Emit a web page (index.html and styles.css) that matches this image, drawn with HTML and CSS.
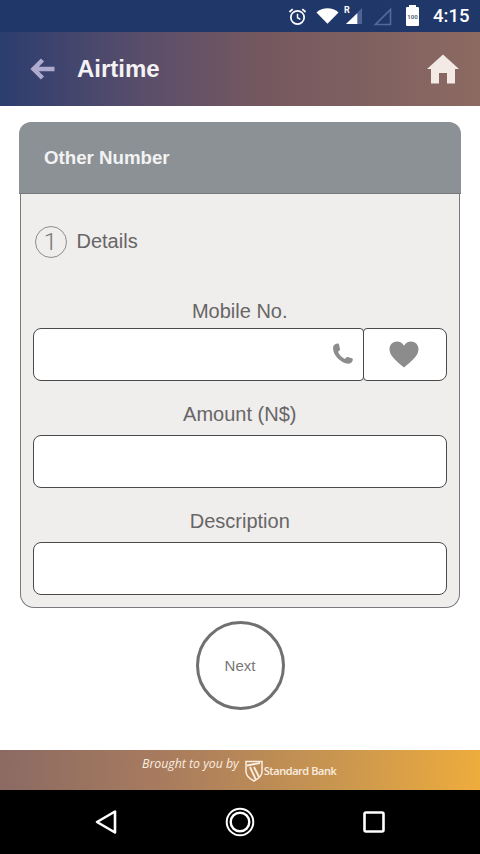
FILE: index.html
```html
<!DOCTYPE html>
<html lang="en">
<head>
<meta charset="utf-8">
<title>Airtime</title>
<link rel="stylesheet" href="styles.css">
</head>
<body>
<div class="screen">
  <div class="statusbar">
    <svg class="st-alarm" width="19" height="19" viewBox="0 0 20 20"><circle cx="10" cy="11" r="7" fill="none" stroke="#fff" stroke-width="1.8"/><path d="M10 7v4.300l3 1.800" fill="none" stroke="#fff" stroke-width="1.500"/><path d="M1.500 5.200 5 2.200M18.500 5.200 15 2.200" stroke="#fff" stroke-width="1.900"/></svg>
    <svg class="st-wifi" width="23" height="18" viewBox="0 0 25 18"><path d="M.5 5.200C4 2 8 .7 12.500.7S21 2 24.500 5.200L12.500 17.500z" fill="#fff"/></svg>
    <div class="st-cell">
      <svg width="18" height="18" viewBox="0 0 19 19"><path d="M18 1v17H1z" fill="#4e6394"/><path d="M13 6.500V18H1z" fill="#fff"/></svg>
      <span class="st-r">R</span>
    </div>
    <svg class="st-sig2" width="19" height="19" viewBox="0 0 19 19"><path d="M17.500 2.500v15H2.500z" fill="none" stroke="#55699a" stroke-width="1.700"/></svg>
    <div class="st-batt"><span>100</span></div>
    <span class="st-time">4:15</span>
  </div>
  <header class="appbar">
    <svg class="back" width="26" height="24" viewBox="0 0 26 24"><path d="M12.500 3 3.500 12l9 9M4.500 12h20" fill="none" stroke="#aeabce" stroke-width="4.400"/></svg>
    <h1 class="title">Airtime</h1>
    <svg class="home" width="34" height="30" viewBox="0 0 34 30"><path d="M17 .5 33 15h-4v14.500h-8V19h-8v10.500H5V15H1z" fill="#f3e9e5"/></svg>
  </header>
  <main class="content">
    <section class="card">
      <div class="card-head">Other Number</div>
      <div class="card-body">
        <div class="step"><span class="step-num">1</span><span class="step-label">Details</span></div>
        <div class="field first">
          <label class="field-label">Mobile No.</label>
          <div class="mobile-row">
            <div class="input mobile-input">
              <svg width="27" height="27" viewBox="0 0 24 24"><path d="M3 4.500c1-1.500 2.500-2.300 3.800-2.200.8 0 1.200.4 1.300 1.200l.8 3.700c.1.700-.2 1.100-.7 1.500l-1 .9c1 2.800 3.200 5.100 6 6.300l1-1.100c.5-.5 1-.7 1.700-.5l3.400 1c.7.200 1.100.6 1 1.400-.2 1.400-1.200 2.900-2.900 3.400C10.500 21 1 11.500 3 4.500z" fill="#8c8c8c"/></svg>
            </div>
            <div class="input fav">
              <svg width="30" height="27" viewBox="0 0 30 27"><path d="M15 26.500C9 21 .5 15.500.5 8.200.5 3.500 4 .5 8 .5c3 0 5.500 1.500 7 4.200C16.500 2 19 .5 22 .5c4 0 7.500 3 7.500 7.700C29.500 15.500 21 21 15 26.500z" fill="#8c8c8c"/></svg>
            </div>
          </div>
        </div>
        <div class="field">
          <label class="field-label">Amount (N$)</label>
          <div class="input"></div>
        </div>
        <div class="field">
          <label class="field-label">Description</label>
          <div class="input"></div>
        </div>
      </div>
    </section>
    <button class="next" type="button">Next</button>
  </main>
  <div class="sponsor">
    <span class="brought">Brought to you by</span>
    <svg class="shield" width="18" height="22" viewBox="0 0 18 22"><path d="M1 1.500h16v10c0 4.500-4 7.500-8 9.500-4-2-8-5-8-9.500z" fill="none" stroke="#fbeee0" stroke-width="1.500"/><path d="M2 5.500 15 3M5 7l6 13M9 7l5 10" fill="none" stroke="#fbeee0" stroke-width="1.800"/></svg>
    <span class="bank">Standard Bank</span>
  </div>
  <nav class="navbar">
    <svg width="24" height="26" viewBox="0 0 24 26"><path d="M21 2.500v21L3 13z" fill="none" stroke="#fff" stroke-width="2.600" stroke-linejoin="round"/></svg>
    <svg width="30" height="30" viewBox="0 0 30 30"><circle cx="15" cy="15" r="13.300" fill="none" stroke="#fff" stroke-width="2"/><circle cx="15" cy="15" r="9.300" fill="none" stroke="#fff" stroke-width="2.400"/></svg>
    <svg width="24" height="24" viewBox="0 0 24 24"><rect x="2.500" y="2.500" width="19" height="19" rx="1.500" fill="none" stroke="#fff" stroke-width="2.600"/></svg>
  </nav>
</div>
</body>
</html>
```

FILE: styles.css
```css
* { box-sizing: border-box; }
html, body { margin: 0; padding: 0; }
body { width: 480px; height: 854px; overflow: hidden; background: #fff; font-family: "Liberation Sans", Arial, sans-serif; }
.screen { width: 480px; height: 854px; display: flex; flex-direction: column; }

.statusbar { height: 32px; background: #1f3769; display: flex; align-items: center; padding-left: 288px; color: #fff; flex: none; }
.st-alarm { margin-right: 9px; }
.st-wifi { margin-right: 6px; }
.st-cell { position: relative; width: 18px; height: 18px; }
.st-cell svg { display: block; }
.st-r { position: absolute; top: -2px; left: -1px; font: bold 9px "Roboto", sans-serif; }
.st-sig2 { margin-left: 10px; }
.st-batt { width: 13px; height: 19px; margin: 1px 0 0 14px; background: #fff; border-radius: 1px; position: relative; display: flex; align-items: center; justify-content: center; }
.st-batt::before { content: ""; position: absolute; top: -2px; left: 3px; width: 7px; height: 2px; background: #fff; }
.st-batt span { font: bold 6px "Roboto", sans-serif; color: #5a6a80; }
.st-time { font: 500 18.500px "Roboto", sans-serif; margin-left: 14px; }

.appbar { height: 74px; flex: none; display: flex; align-items: center; padding: 0 20px 0 30px; background: linear-gradient(90deg, #2c3d70 0%, #5a4e6a 30%, #75585f 55%, #8c6a62 100%); }
.title { margin: 0 0 0 21px; flex: 1; font-size: 24px; font-weight: bold; color: #f4f2f4; }

.content { flex: 1; display: flex; flex-direction: column; align-items: center; padding-top: 16px; }
.card { width: 442px; }
.card-head { height: 72px; background: #8c9196; border-radius: 12px 12px 0 0; border-bottom: 1px solid #77797c; color: #f3f3f3; font-size: 18.700px; font-weight: bold; padding: 25px 0 0 25px; }
.card-body { height: 414px; margin: 0 1px; background: #f0eded; border: 1.500px solid #77797c; border-top: 0; border-radius: 0 0 14px 14px; padding: 32px 12px 0 11.500px; }

.step { display: flex; align-items: center; gap: 10px; padding-left: 2px; height: 32px; }
.step-num { width: 32px; height: 32px; border: 1.500px solid #8f8d8c; border-radius: 50%; display: flex; align-items: center; justify-content: center; font: 300 24px "Roboto", sans-serif; color: #777; }
.step-label { font-size: 20px; color: #666; padding-bottom: 2px; }

.field { margin-top: 22px; }
.field.first { margin-top: 42px; }
.field-label { display: block; text-align: center; font-size: 20px; line-height: 22px; color: #666; margin-bottom: 10px; }
.first .field-label { margin-bottom: 6px; }
.input { height: 53px; background: #fff; border: 1.500px solid #4a4a4a; border-radius: 8px; }
.mobile-row { display: flex; }
.mobile-input { flex: none; width: 331px; border-radius: 8px 4px 4px 8px; display: flex; align-items: center; justify-content: flex-end; padding-right: 6px; }
.fav { flex: 1; margin-left: -1px; border-radius: 4px 8px 8px 4px; display: flex; align-items: center; justify-content: center; padding-right: 2px; }

.next { width: 89px; height: 89px; margin-top: 13px; background: #fff; border: 3px solid #707070; border-radius: 50%; font: 15px "Liberation Sans", Arial, sans-serif; color: #777; padding: 0; }

.sponsor { height: 40px; flex: none; display: flex; align-items: center; padding-left: 142px; background: linear-gradient(90deg, #8b6a63 0%, #a97c5e 35%, #c99650 70%, #eeac3c 100%); color: #fbeee0; }
.brought { font: italic 12.300px "Open Sans", sans-serif; margin: -13px 6px 0 0; }
.shield { margin-top: 2px; }
.bank { font: 600 11px "Open Sans", sans-serif; margin-left: 1px; letter-spacing: -.45px; margin-top: 1px; }

.navbar { height: 64px; flex: none; background: #000; display: flex; align-items: center; padding: 0 94px; justify-content: space-between; }
```
